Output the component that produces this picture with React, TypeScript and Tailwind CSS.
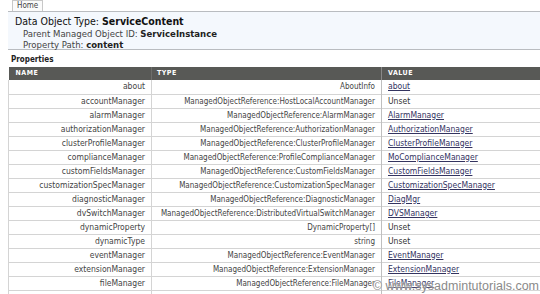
import React from 'react';

const rows: { name: string; type: string; value: string; link: boolean }[] = [
    { name: 'about', type: 'AboutInfo', value: 'about', link: true },
    { name: 'accountManager', type: 'ManagedObjectReference:HostLocalAccountManager', value: 'Unset', link: false },
    { name: 'alarmManager', type: 'ManagedObjectReference:AlarmManager', value: 'AlarmManager', link: true },
    { name: 'authorizationManager', type: 'ManagedObjectReference:AuthorizationManager', value: 'AuthorizationManager', link: true },
    { name: 'clusterProfileManager', type: 'ManagedObjectReference:ClusterProfileManager', value: 'ClusterProfileManager', link: true },
    { name: 'complianceManager', type: 'ManagedObjectReference:ProfileComplianceManager', value: 'MoComplianceManager', link: true },
    { name: 'customFieldsManager', type: 'ManagedObjectReference:CustomFieldsManager', value: 'CustomFieldsManager', link: true },
    { name: 'customizationSpecManager', type: 'ManagedObjectReference:CustomizationSpecManager', value: 'CustomizationSpecManager', link: true },
    { name: 'diagnosticManager', type: 'ManagedObjectReference:DiagnosticManager', value: 'DiagMgr', link: true },
    { name: 'dvSwitchManager', type: 'ManagedObjectReference:DistributedVirtualSwitchManager', value: 'DVSManager', link: true },
    { name: 'dynamicProperty', type: 'DynamicProperty[]', value: 'Unset', link: false },
    { name: 'dynamicType', type: 'string', value: 'Unset', link: false },
    { name: 'eventManager', type: 'ManagedObjectReference:EventManager', value: 'EventManager', link: true },
    { name: 'extensionManager', type: 'ManagedObjectReference:ExtensionManager', value: 'ExtensionManager', link: true },
    { name: 'fileManager', type: 'ManagedObjectReference:FileManager', value: 'FileManager', link: true },
    { name: '', type: '', value: '', link: false },
];

export default function App() {
    return (
        <div className="w-[540px] h-[294px] overflow-hidden bg-white relative text-[#333] font-['DejaVu_Sans_Condensed','DejaVu_Sans',sans-serif]">
            {/* tab */}
            <div className="flex pl-[12px] h-[11px]">
                <div className="h-[11px] border border-b-0 border-[#c8c8c8] bg-[#fbfbfb] px-[4px] text-[8px] leading-[10px] text-[#444]">
                    Home
                </div>
            </div>

            {/* object header */}
            <div className="ml-[8px] h-[39px] border-y border-[#b9bcc0] bg-[#f4f8fd] pl-[7px] pt-[2px]">
                <div className="text-[10.5px] leading-[14px] text-[#111] [font-family:'DejaVu_Sans',sans-serif] font-stretch-condensed">
                    Data Object Type: <b>ServiceContent</b>
                </div>
                <div className="pl-[8px] text-[9.5px] leading-[11px] text-[#444]">
                    Parent Managed Object ID: <b className="text-[#222]">ServiceInstance</b>
                </div>
                <div className="pl-[8px] text-[9.5px] leading-[11px] text-[#444]">
                    Property Path: <b className="text-[#222]">content</b>
                </div>
            </div>

            <div className="ml-[11px] mt-[5px] text-[8px] leading-[10px] font-bold text-[#222]">Properties</div>

            <table className="ml-[8px] mt-[2px] w-[532px] table-fixed border-collapse text-[8.5px] leading-[13px]">
                <colgroup>
                    <col className="w-[143px]" />
                    <col className="w-[230px]" />
                    <col />
                </colgroup>
                <thead>
                    <tr className="bg-[#585956] text-white text-[7px] font-bold tracking-[0.5px] h-[13px]">
                        <th className="text-left pl-[7px] border-r border-[#6d6e6b]">NAME</th>
                        <th className="text-left pl-[5px] border-r border-[#888]">TYPE</th>
                        <th className="text-left pl-[6px]">VALUE</th>
                    </tr>
                </thead>
                <tbody>
                    {rows.map((r, i) => (
                        <tr key={i} className="h-[14px] border-b border-[#d4d4d4]">
                            <td className="text-right pr-[6px] border-l border-r border-[#d4d4d4] text-[#444] whitespace-nowrap">{r.name}</td>
                            <td className="text-right pr-[6px] border-r border-[#bfbfbf] text-[#444] text-[8px] whitespace-nowrap">{r.type}</td>
                            <td className="pl-[6px] whitespace-nowrap">
                                {r.link ? (
                                    <span className="underline text-[#33335f]">{r.value}</span>
                                ) : (
                                    <span className="text-[#333]">{r.value}</span>
                                )}
                            </td>
                        </tr>
                    ))}
                </tbody>
            </table>

            <div className="absolute right-[1px] top-[279px] text-[12.5px] leading-[14px] text-[#8a8a8a] [font-family:'Liberation_Sans',sans-serif] [text-shadow:0_0_2px_#fff]">
                © www.sysadmintutorials.com
            </div>
        </div>
    );
}
